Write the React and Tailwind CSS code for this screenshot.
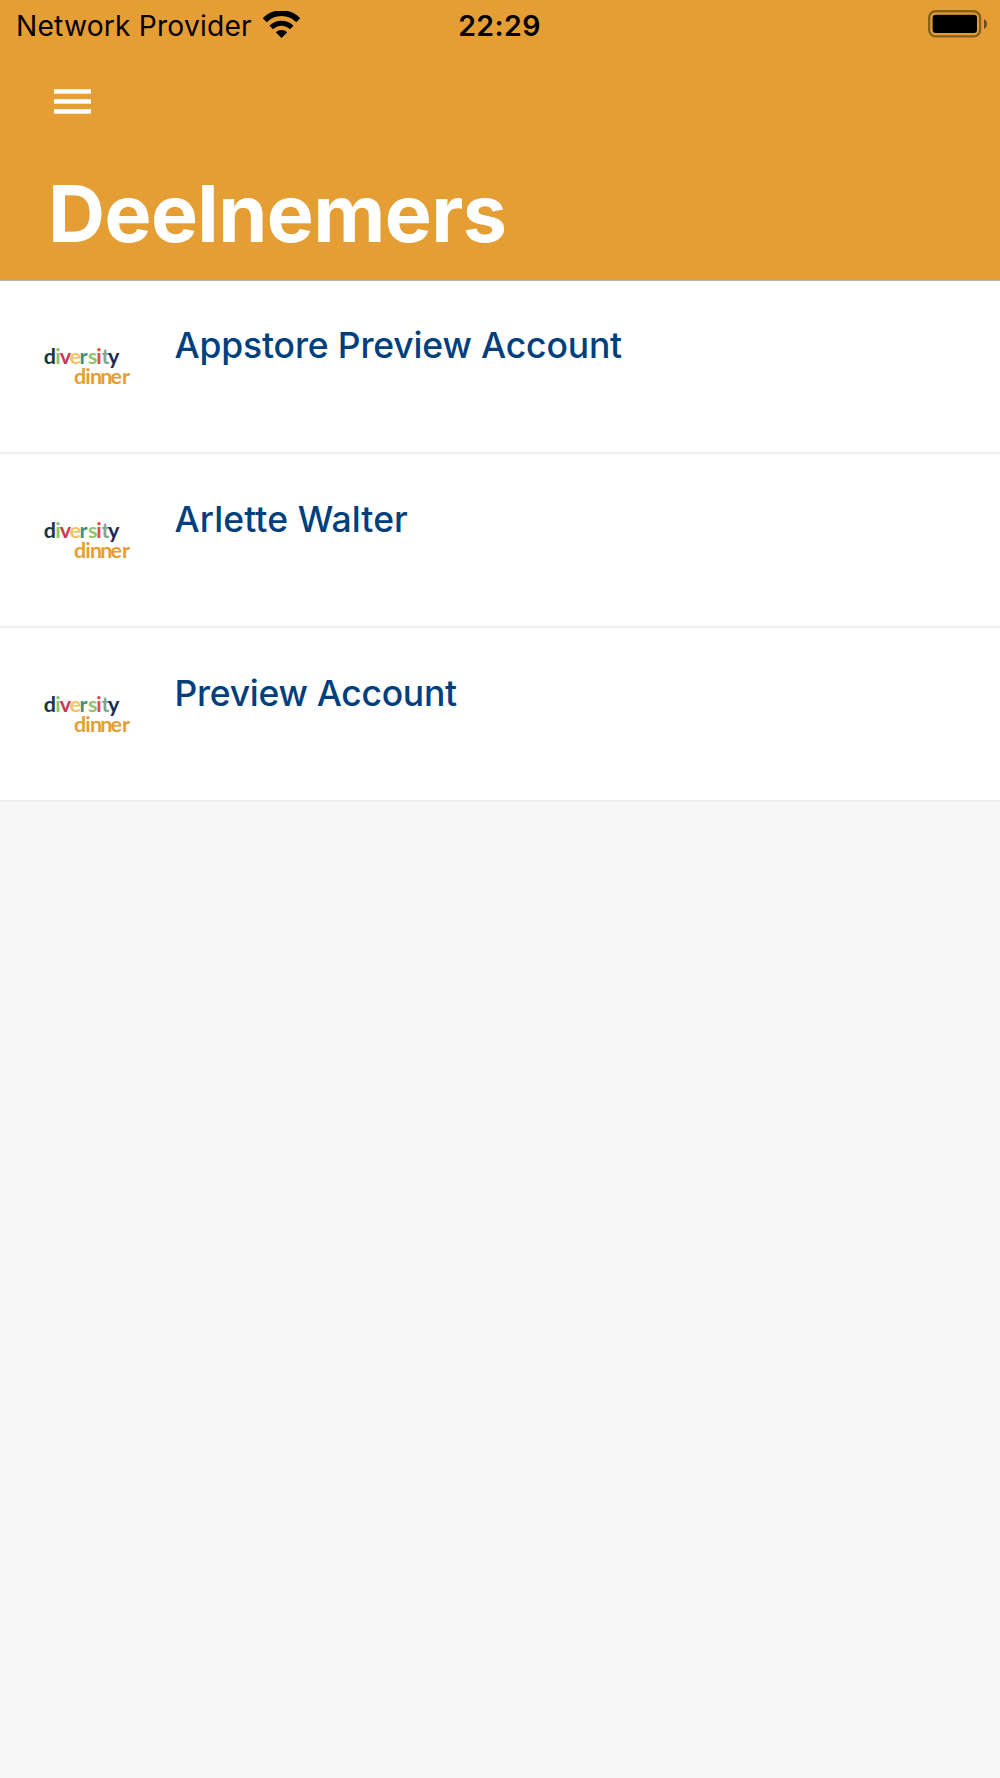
const participants = [
    { id: 1, name: 'Appstore Preview Account', spacing: 'tracking-[-0.16px]' },
    { id: 2, name: 'Arlette Walter', spacing: 'tracking-[0.1px]' },
    { id: 3, name: 'Preview Account', spacing: 'tracking-[-0.29px]' },
];

const topLetters = [
    { char: 'd', x: 10.8, color: '#16383f' },
    { char: 'i', x: 22.2, color: '#8cc665' },
    { char: 'v', x: 26.8, color: '#cb3559' },
    { char: 'e', x: 36.6, color: '#f3c261' },
    { char: 'r', x: 46.5, color: '#3f9080' },
    { char: 's', x: 54.9, color: '#8fc46c' },
    { char: 'i', x: 63.3, color: '#d9512f' },
    { char: 't', x: 68.4, color: '#7fa78c' },
    { char: 'y', x: 75, color: '#1d2850' },
];

function WifiIcon() {
    return (
        <svg className="w-[37px] h-[28px]" viewBox="0 0 37 28" fill="none" stroke="black">
            <path d="M1.8 9.2C11 -0.3 26 -0.3 35.2 9.2" strokeWidth="5.6" />
            <path d="M8.3 16.5C14 10.8 23 10.8 28.7 16.5" strokeWidth="5.2" />
            <path d="M18.5 27L12.9 21.4C16 18.3 21 18.3 24.1 21.4Z" fill="black" stroke="none" />
        </svg>
    );
}

function BatteryIcon() {
    return (
        <svg className="w-[60px] h-[28px] -mt-[3px]" viewBox="0 0 60 28">
            <rect x="1.2" y="1.2" width="50.9" height="25.2" rx="6.5" fill="none" stroke="black" strokeOpacity="0.4" strokeWidth="2.4" />
            <rect x="4.6" y="4.8" width="44.4" height="18.2" rx="3.2" fill="black" />
            <path d="M56 9V19Q59 17.5 59 14Q59 10.5 56 9Z" fill="black" fillOpacity="0.5" />
        </svg>
    );
}

function StatusBar() {
    return (
        <div className="grid grid-cols-3 h-12 pt-[3px] pl-[16px] pr-[12px] items-center text-black">
            <div className="flex items-center gap-[11px]">
                <span className="pt-[2px] text-[28.2px] tracking-[0.2px] whitespace-nowrap">Network Provider</span>
                <WifiIcon />
            </div>
            <span className="text-center text-[28.5px] font-semibold tracking-[0.4px] pr-[5px] pt-px">22:29</span>
            <div className="flex justify-end">
                <BatteryIcon />
            </div>
        </div>
    );
}

function Header() {
    return (
        <header className="h-[280px] bg-[#e59e34]">
            <StatusBar />
            <button className="block mt-[41px] ml-[54px]" aria-label="Menu">
                <svg className="w-[37px] h-[25px]" viewBox="0 0 37 25" fill="white">
                    <rect y="0.2" width="37" height="4.5" />
                    <rect y="10.2" width="37" height="4.5" />
                    <rect y="20.2" width="37" height="4.5" />
                </svg>
            </button>
            <h1 className="mt-[51px] ml-[48px] text-[79px] leading-[96px] font-bold text-white tracking-[-0.6px]">
                Deelnemers
            </h1>
        </header>
    );
}

function Logo() {
    return (
        <svg className="w-[100px] h-[60px] shrink-0" viewBox="0 0 100 60" fontFamily="Lato, sans-serif" fontWeight="700" fontSize="21.5">
            <text y="29.3">
                {topLetters.map((letter, i) => (
                    <tspan key={i} x={letter.x} fill={letter.color}>{letter.char}</tspan>
                ))}
            </text>
            <text x="41.1 52.2 56.9 67.2 77.5 89" y="49" fill="#e59e34">dinner</text>
        </svg>
    );
}

function ParticipantRow({ participant }) {
    return (
        <li className="flex h-[174px] bg-white border-b-2 border-[#eeeeee] pl-[33px] pt-[55px]">
            <Logo />
            <span className={`ml-[41.5px] -mt-[11px] text-[35.5px] leading-[44px] font-medium text-[#003f7d] ${participant.spacing}`}>
                {participant.name}
            </span>
        </li>
    );
}

function App() {
    return (
        <div className="min-h-[1778px] bg-[#f7f7f7] font-['Inter',sans-serif]">
            <Header />
            <div className="h-px -mb-px relative bg-[#b9b2a8]" />
            <ul>
                {participants.map((participant) => (
                    <ParticipantRow key={participant.id} participant={participant} />
                ))}
            </ul>
        </div>
    );
}

export default App;
